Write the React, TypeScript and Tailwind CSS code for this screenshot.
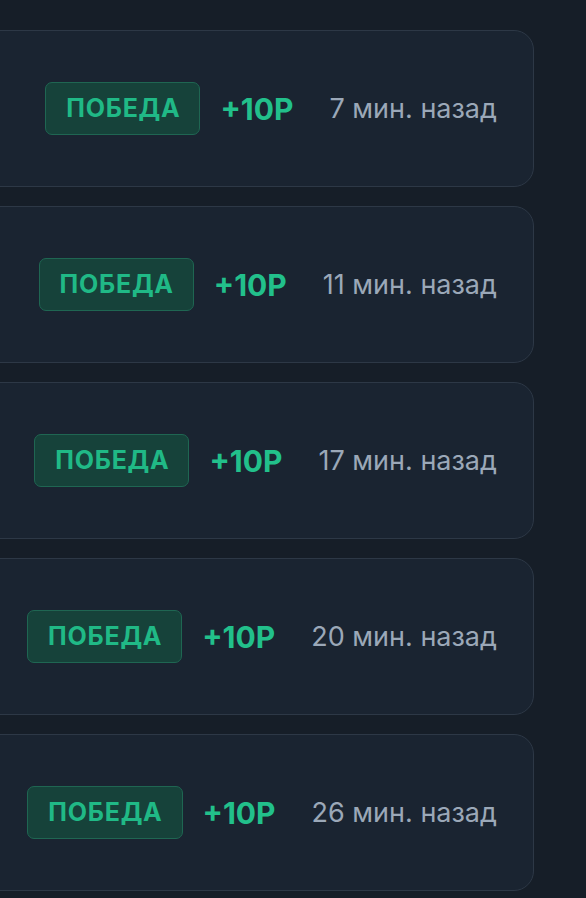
import React from 'react';

const rows = [
  { minutes: 7 },
  { minutes: 11 },
  { minutes: 17 },
  { minutes: 20 },
  { minutes: 26 },
];

export default function App() {
  return (
    <div
      className="w-[586px] h-[898px] overflow-hidden bg-[#161e28]"
      style={{ fontFamily: 'Inter, "Noto Sans", sans-serif' }}
    >
      <div className="w-[654px] -ml-[120px] pt-[30px] flex flex-col gap-[19px]">
        {rows.map((r) => (
          <div
            key={r.minutes}
            className="h-[157px] rounded-[20px] border border-[#2d3846] bg-[#1a2431] flex items-center justify-end pr-[36px]"
          >
            {/* result badge */}
            <span className="h-[53px] pl-[20px] pr-[19px] flex items-center rounded-[7px] border border-[#1f6652] bg-[#16423a] text-[#20b986] text-[25px] font-bold tracking-[0.03em] leading-none">
              ПОБЕДА
            </span>
            <span className="ml-[20px] text-[#22c08b] text-[30px] font-bold leading-none">
              +10Р
            </span>
            <span className="ml-[36px] text-[#9ba8b8] text-[27px] leading-none">
              {r.minutes} мин. назад
            </span>
          </div>
        ))}
      </div>
    </div>
  );
}
